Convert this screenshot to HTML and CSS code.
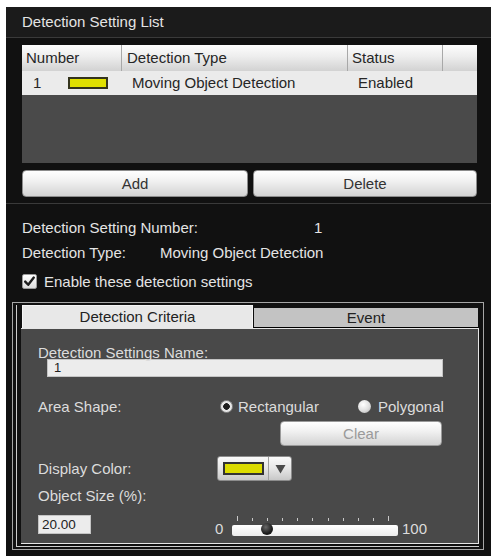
FILE: index.html
```html
<!DOCTYPE html>
<html>
<head>
<meta charset="utf-8">
<title>Detection Setting List</title>
<link rel="stylesheet" href="styles.css">
</head>
<body>
<div class="panel">
  <div class="title">Detection Setting List</div>

  <div class="list">
    <div class="list-head">
      <div class="th c-num">Number</div>
      <div class="th c-type">Detection Type</div>
      <div class="th c-status">Status</div>
      <div class="th c-end"></div>
    </div>
    <div class="list-row">
      <div class="td c-num"><span class="row-num">1</span><span class="swatch"></span></div>
      <div class="td c-type">Moving Object Detection</div>
      <div class="td c-status">Enabled</div>
    </div>
  </div>

  <div class="btn-row">
    <button class="btn btn-add">Add</button>
    <button class="btn btn-del">Delete</button>
  </div>

  <div class="sep"></div>

  <div class="info">
    <div class="info-row"><span class="info-label lbl-num">Detection Setting Number:</span><span>1</span></div>
    <div class="info-row"><span class="info-label lbl-type">Detection Type:</span><span>Moving Object Detection</span></div>
    <div class="check-row">
      <span class="checkbox"><svg width="13" height="13" viewBox="0 0 13 13"><path d="M2.2 6.6 L5.2 9.8 L10.8 2.6" fill="none" stroke="#1e1e1e" stroke-width="2.4" stroke-linecap="round" stroke-linejoin="round"/></svg></span>
      <span>Enable these detection settings</span>
    </div>
  </div>

  <div class="frame">
    <div class="tabbox">
      <div class="tabs">
        <div class="tab tab-active">Detection Criteria</div>
        <div class="tab tab-event">Event</div>
      </div>
      <div class="tab-panel">
        <div class="plabel name-lbl">Detection Settings Name:</div>
        <div class="text-input name-input">1</div>

        <div class="prow area-row">
          <span class="row-lbl area-lbl">Area Shape:</span>
          <span class="radio-group rg-rect"><span class="radio radio-on"></span><span>Rectangular</span></span>
          <span class="radio-group rg-poly"><span class="radio radio-off"></span><span>Polygonal</span></span>
        </div>

        <button class="btn btn-clear">Clear</button>

        <div class="prow color-row">
          <span class="row-lbl color-lbl">Display Color:</span>
          <div class="color-pick">
            <span class="color-sw"></span>
            <span class="color-arrow"><svg width="11" height="10" viewBox="0 0 11 10"><path d="M0.5 1 L10.5 1 L5.5 9.5 Z" fill="#4a4a4a"/></svg></span>
          </div>
        </div>

        <div class="plabel size-lbl">Object Size (%):</div>
        <div class="prow size-row">
          <div class="text-input size-input">20.00</div>
          <div class="slider">
            <span class="s-min">0</span>
            <div class="s-wrap">
              <div class="ticks">
                <i class="tall"></i><i></i><i></i><i></i><i></i><i></i><i></i><i></i><i></i><i></i><i class="tall"></i>
              </div>
              <div class="track"><span class="thumb"></span></div>
            </div>
            <span class="s-max">100</span>
          </div>
        </div>
      </div>
    </div>
  </div>
</div>
</body>
</html>
```

FILE: styles.css
```css
* { box-sizing: border-box; }

html, body { overflow: hidden; }

body {
  margin: 0;
  padding: 7px 0 0 6px;
  height: 556px;
  background: #ffffff;
  font-family: "Liberation Sans", Arial, sans-serif;
  font-size: 15px;
}

.panel {
  width: 485px;
  height: 549px;
  background: #111111;
  color: #e4e4e4;
  overflow: hidden;
}

.title {
  height: 31px;
  line-height: 30px;
  padding-left: 16px;
  background: #1b1b1b;
  border-bottom: 1px solid #3a3a3a;
}

/* ---------- list ---------- */
.list {
  margin: 7px 0 0 16px;
  width: 455px;
  height: 118px;
  background: #4a4a4a;
  color: #262626;
}

.list-head {
  display: flex;
  height: 26px;
  background: linear-gradient(#fdfdfd, #ededed 45%, #d2d2d2);
}

.th {
  height: 26px;
  line-height: 26px;
  padding-left: 4px;
  border-right: 1px solid #a8a8a8;
}

.c-num { width: 100px; }
.c-type { width: 226px; }
.c-status { width: 95px; }
.c-end { width: 34px; border-right: none; }

.th.c-type { padding-left: 5px; }

.list-row {
  display: flex;
  height: 24px;
  line-height: 24px;
  background: #ebebeb;
}

.td.c-num {
  display: flex;
  align-items: center;
  padding-left: 11px;
}

.row-num { width: 35px; }

.swatch {
  width: 40px;
  height: 12px;
  background: #e0e000;
  border: 2px solid #34341c;
}

.td.c-type { padding-left: 10px; }
.td.c-status { padding-left: 10px; }

/* ---------- buttons ---------- */
.btn-row {
  display: flex;
  gap: 5px;
  margin: 7px 0 0 16px;
  width: 455px;
}

.btn {
  height: 27px;
  border: 1px solid #8c8c8c;
  border-radius: 4px;
  background: linear-gradient(#ffffff, #f1f1f1 40%, #d3d3d3);
  font-family: inherit;
  font-size: 15px;
  color: #333333;
  padding: 0;
}

.btn-add { width: 226px; }
.btn-del { flex: 1; }

.sep {
  margin-top: 6px;
  height: 1px;
  background: #3a3a3a;
}

/* ---------- info ---------- */
.info { padding-left: 16px; }

.info-row {
  display: flex;
  height: 25px;
  line-height: 25px;
}

.info-row:first-child { margin-top: 11px; }

.lbl-num { width: 292px; }
.lbl-type { width: 138px; }

.check-row {
  display: flex;
  align-items: center;
  height: 26px;
  margin-top: 3px;
}

.checkbox {
  width: 15px;
  height: 15px;
  margin-right: 7px;
  background: linear-gradient(#ffffff, #dcdcdc);
  border: 1px solid #9a9a9a;
  border-radius: 2px;
  display: flex;
  align-items: center;
  justify-content: center;
}

/* ---------- frame & tabs ---------- */
.frame {
  margin: 8px 0 0 6px;
  width: 472px;
  height: 248px;
  border: 1px solid #a6a6a6;
  padding: 2px 4px 2px 3px;
}

.tabbox {
  height: 242px;
  border-left: 1px solid #cdcdcd;
  border-bottom: 1px solid #cdcdcd;
  padding: 0 0 2px 4px;
}

.tabs {
  display: flex;
  height: 23px;
}

.tab {
  text-align: center;
  color: #222222;
}

.tab-active {
  margin-left: 1px;
  width: 231px;
  height: 23px;
  line-height: 22px;
  background: #e8e8e8;
  border: 1px solid #f6f6f6;
  border-bottom: none;
}

.tab-event {
  margin-top: 3px;
  width: 225px;
  height: 20px;
  line-height: 19px;
  background: #c3c3c3;
  border-left: 1px solid #0c0c0c;
  border-bottom: 1px solid #000000;
}

.tab-panel {
  width: 458px;
  height: 216px;
  background: #494949;
  border-top: 1px solid #e6e6e6;
  border-right: 1px solid #e6e6e6;
  border-bottom: 1px solid #e6e6e6;
  color: #dcdcdc;
}

.plabel {
  padding-left: 17px;
  height: 16px;
  line-height: 16px;
}

.name-lbl {
  margin-top: 17px;
  height: 13px;
  line-height: 13px;
}

.text-input {
  background: #ececec;
  border: 1px solid #c4c4c4;
  color: #222222;
  font-size: 13px;
}

.name-input {
  margin: 0 0 0 26px;
  width: 396px;
  height: 18px;
  line-height: 16px;
  padding-left: 6px;
}

.prow {
  display: flex;
  align-items: center;
  padding-left: 17px;
}

.area-row {
  margin-top: 19px;
  height: 20px;
}

.area-lbl { width: 182px; }

.radio-group {
  display: flex;
  align-items: center;
}

.rg-rect { width: 138px; gap: 5px; }
.rg-poly { gap: 7px; }

.radio {
  width: 13px;
  height: 13px;
  border-radius: 50%;
}

.radio-on {
  background: radial-gradient(circle, #1e1e1e 0 3px, #e6e6e6 3.6px);
  border: 1px solid #8a8a8a;
}

.radio-off {
  background: radial-gradient(circle at 40% 35%, #ffffff, #dedede 55%, #a8a8a8);
}

.btn-clear {
  display: block;
  margin: 5px 0 0 259px;
  width: 162px;
  height: 25px;
  color: #9a9a9a;
  border-color: #9a9a9a;
}

.color-row {
  margin-top: 10px;
  height: 25px;
}

.color-lbl { width: 179px; }

.color-pick {
  display: flex;
  align-items: center;
  width: 75px;
  height: 25px;
  padding-left: 5px;
  border: 1px solid #8c8c8c;
  border-radius: 3px;
  background: linear-gradient(#fafafa, #e6e6e6 50%, #c8c8c8);
}

.color-sw {
  width: 41px;
  height: 13px;
  background: #dcdc00;
  border: 2px solid #333333;
}

.color-arrow {
  margin-left: 4px;
  width: 23px;
  height: 23px;
  border-left: 1px solid #a0a0a0;
  display: flex;
  align-items: center;
  justify-content: center;
}

.size-lbl { margin-top: 7px; }

.size-row {
  margin-top: 4px;
  height: 28px;
  align-items: flex-end;
}

.size-input {
  width: 53px;
  height: 19px;
  line-height: 17px;
  padding-left: 3px;
  margin-bottom: 2px;
  font-size: 13.5px;
}

.slider {
  display: flex;
  align-items: flex-end;
  margin-left: 124px;
}

.s-min {
  width: 8px;
  margin-right: 9px;
  line-height: 14px;
}

.s-max {
  margin-left: 4px;
  line-height: 14px;
}

.s-wrap { width: 166px; }

.ticks {
  display: flex;
  justify-content: space-between;
  align-items: flex-end;
  padding: 0 9px 0 5px;
  height: 5px;
  margin-bottom: 4px;
}

.ticks i {
  width: 1px;
  height: 3px;
  background: #c8c8c8;
}

.ticks i.tall { height: 5px; }

.track {
  position: relative;
  height: 11px;
  background: linear-gradient(#ffffff, #ececec);
  border-radius: 2px;
}

.thumb {
  position: absolute;
  left: 29px;
  top: -2px;
  width: 12px;
  height: 12px;
  border-radius: 50%;
  background: radial-gradient(circle at 40% 35%, #6a6a6a, #1c1c1c 60%, #111111);
}
```
